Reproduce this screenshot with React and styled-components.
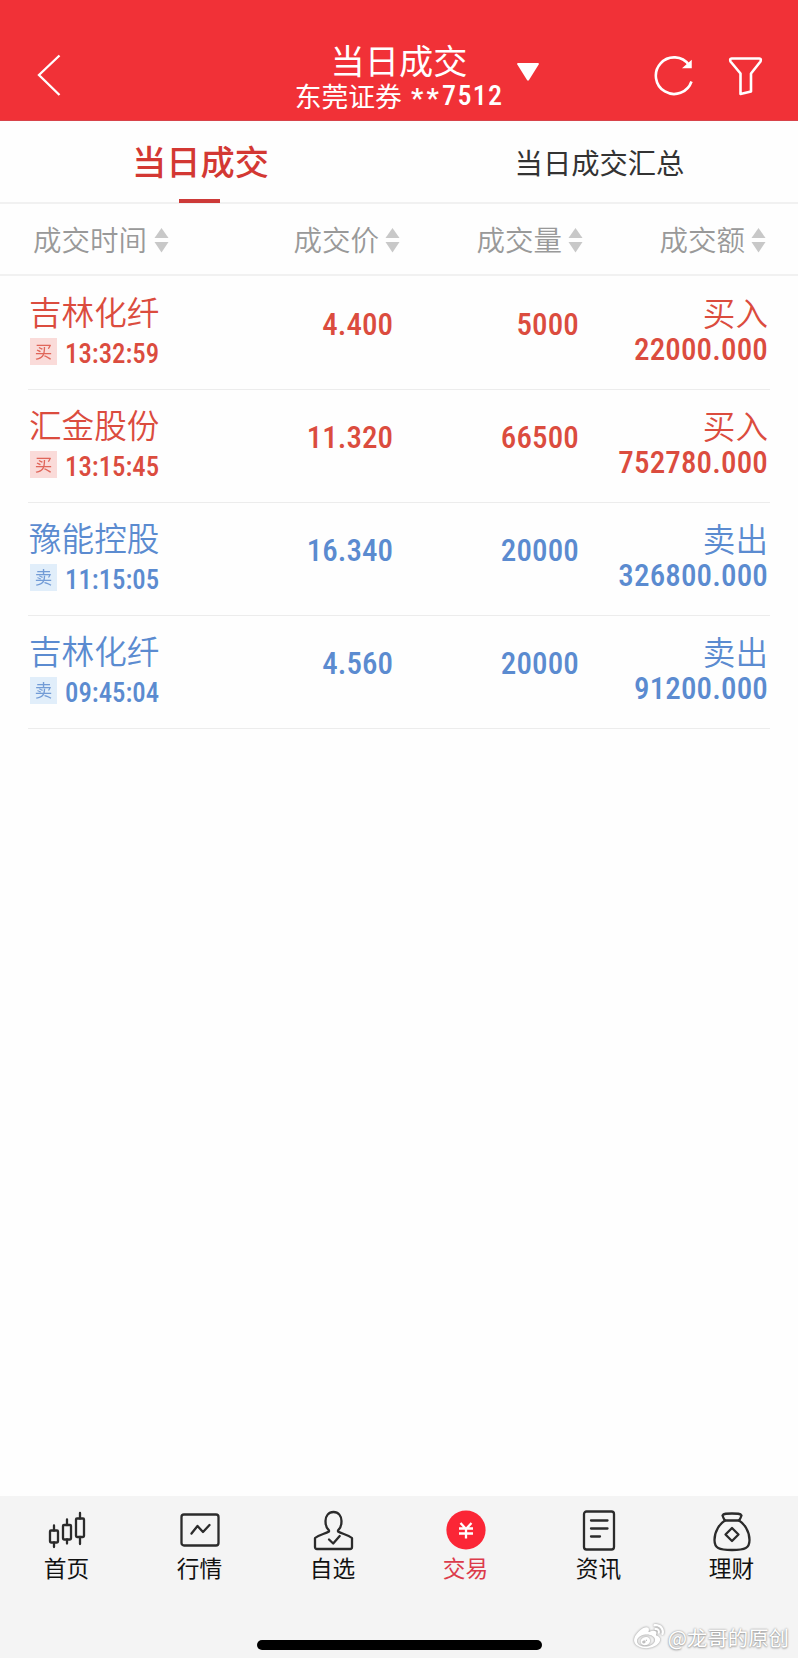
import React from "react";
import styled, { createGlobalStyle } from "styled-components";
import { FaWeibo } from "react-icons/fa";

const GlobalStyle = createGlobalStyle`
  * { box-sizing: border-box; }
  body { margin: 0; background: #fff; }
`;

const cjk = `"Noto Sans CJK SC", sans-serif`;
const digits = `Roboto, "Noto Sans CJK SC", sans-serif`;
const BUY = "#db4c3e";
const SELL = "#5b8bd0";

const Screen = styled.div`
  position: relative;
  display: flex;
  flex-direction: column;
  width: 798px;
  height: 1658px;
  overflow: hidden;
  background: #fefefe;
  font-family: ${cjk};
`;

const Header = styled.header`
  display: grid;
  grid-template-columns: 200px 1fr 200px;
  height: 121px;
  padding-top: 36px;
  color: #fff;
  background: #f13137;
  border-bottom: 1px solid #d8434a;
`;

const BackButton = styled.button`
  display: block;
  width: 60px;
  height: 66px;
  margin-left: 20px;
  padding: 0;
  border: 0;
  background: none;
  svg { display: block; margin: 12px 0 0 17px; }
`;

const TitleArea = styled.div`
  position: relative;
  text-align: center;
`;

const Title = styled.h1`
  margin: 0;
  font-size: 34.2px;
  font-weight: 400;
  line-height: 46px;
`;

const Account = styled.div`
  display: flex;
  justify-content: center;
  align-items: center;
  height: 26px;
  margin-top: 1px;
  font-size: 26.8px;
  line-height: 26px;
  font-weight: 400;
`;

const AccountNumber = styled.span`
  display: flex;
  align-items: center;
  margin-left: 9px;
  font-family: ${digits};
  font-size: 28px;
  font-stretch: 75%;
  font-weight: 500;
  letter-spacing: 1.3px;
  white-space: nowrap;
`;

const Mask = styled.span`
  padding-top: 6px;
  letter-spacing: 3.2px;
`;

const Caret = styled.svg`
  position: absolute;
  left: 316px;
  top: 26px;
`;

const Actions = styled.div`
  display: flex;
  gap: 33px;
  padding: 19px 0 0 55px;
  svg { display: block; flex: none; }
`;

const Tabs = styled.nav`
  display: grid;
  grid-template-columns: 1fr 1fr;
  height: 83px;
  border-bottom: 2px solid #f1f1f1;
`;

const Tab = styled.div`
  display: flex;
  flex-direction: column;
  align-items: center;
  justify-content: space-between;
  padding-top: ${(p) => (p.$active ? 17 : 19)}px;
  margin-bottom: -1px;
  color: ${(p) => (p.$active ? "#d33833" : "#333")};
  font-size: ${(p) => (p.$active ? 34.2 : 28.3)}px;
  font-weight: ${(p) => (p.$active ? 500 : 400)};
  line-height: 44px;
  padding-left: 2px;
  &::after {
    content: "";
    width: 41px;
    height: 4px;
    margin-right: 2px;
    background: ${(p) => (p.$active ? "#cd3a38" : "transparent")};
  }
`;

const ColumnHeads = styled.div`
  display: grid;
  grid-template-columns: 167px 200px 183px 183px;
  height: 72px;
  padding: 0 32px 0 33px;
  align-items: center;
  color: #999;
  border-bottom: 2px solid #f1f1f1;
`;

const ColumnHead = styled.div`
  display: flex;
  align-items: center;
  justify-content: flex-end;
  gap: 6px;
  height: 40px;
  font-size: 28.5px;
  font-weight: 350;
  line-height: 40px;
  white-space: nowrap;
  &:first-child { justify-content: flex-start; gap: 7px; }
  svg { display: block; flex: none; margin-top: 1px; }
`;

const Trades = styled.main`
  flex: 1;
  padding: 0 28px;
`;

const TradeRow = styled.article`
  display: grid;
  grid-template-columns: 165px 200px 186px 189px;
  height: 113px;
  color: ${(p) => (p.$buy ? BUY : SELL)};
  border-bottom: 1px solid #ececec;
  &:first-child { height: 114px; padding-top: 1px; }
`;

const Security = styled.div`
  display: flex;
  flex-direction: column;
  padding: 15px 0 0 1px;
`;

const Name = styled.div`
  font-size: 32.6px;
  font-weight: 350;
  line-height: 38px;
  white-space: nowrap;
`;

const TimeLine = styled.div`
  display: flex;
  align-items: flex-start;
  margin-top: 8px;
`;

const Badge = styled.span`
  width: 27px;
  height: 27px;
  margin: 0 8px 0 1px;
  text-align: center;
  font-size: 17.5px;
  line-height: 25px;
  opacity: 0.85;
  background: ${(p) => (p.$buy ? "#fad5d3" : "#dcecfa")};
`;

const Figure = styled.div`
  font-family: ${digits};
  font-size: ${(p) => p.$size || 31}px;
  font-weight: 500;
  font-stretch: 75%;
  line-height: 30px;
  letter-spacing: ${(p) => p.$spacing || 0}px;
  text-align: right;
  white-space: nowrap;
  margin-top: ${(p) => p.$top || 0}px;
`;

const Total = styled.div`
  padding-top: 16px;
  text-align: right;
`;

const Direction = styled.div`
  font-size: 32.6px;
  font-weight: 350;
  line-height: 38px;
`;

const BottomBar = styled.footer`
  display: flex;
  flex-direction: column;
  align-items: center;
  justify-content: space-between;
  height: 162px;
  padding-bottom: 8px;
  background: #f4f4f4;
`;

const NavItems = styled.nav`
  display: grid;
  grid-template-columns: repeat(6, 133px);
`;

const NavItem = styled.div`
  display: flex;
  flex-direction: column;
  align-items: center;
  padding-top: 14px;
  color: ${(p) => (p.$active ? "#dc3b4b" : "#111")};
  font-size: 22.7px;
  line-height: 30px;
  svg { display: block; margin-bottom: 1px; }
`;

const HomeIndicator = styled.div`
  width: 285px;
  height: 10px;
  border-radius: 5px;
  background: #000;
`;

const Watermark = styled.div`
  position: absolute;
  right: 9px;
  bottom: 6px;
  display: flex;
  align-items: center;
  gap: 4px;
  color: #fff;
  font-size: 20.4px;
  line-height: 30px;
  text-shadow: 0 0 2px #888, 0 1px 2px #aaa;
  svg { filter: drop-shadow(0 0 1px #888); }
`;

const SortIcon = () => (
  <svg width="15" height="26" viewBox="0 0 15 26" fill="#c8c8c8">
    <path d="M7.5 1 14.500 11H.5z" />
    <path d="M.5 15h14L7.5 25.500z" />
  </svg>
);

const NavIcon = ({ children }) => (
  <svg width="42" height="42" viewBox="0 0 42 42" fill="none" stroke="#2b2b2b" strokeWidth="2.3" strokeLinejoin="round" strokeLinecap="round">
    {children}
  </svg>
);

const navItems = [
  {
    label: "首页",
    icon: (
      <>
        <rect x="4" y="20.500" width="8" height="12" rx="1" />
        <rect x="17" y="15" width="8" height="14.500" rx="1" />
        <rect x="30" y="8.500" width="8" height="18.500" rx="1" />
        <path d="M8 15.500v5M8 32.500v4.500M21 9.500v5.500M21 29.500v4M34 3v5.500M34 27v7" />
      </>
    ),
  },
  {
    label: "行情",
    icon: (
      <>
        <rect x="2.5" y="4.500" width="37" height="31" rx="2.500" />
        <path d="M12.500 23.500l6-7.500 5.500 6 6.500-7" />
      </>
    ),
  },
  {
    label: "自选",
    icon: (
      <>
        <path d="M17 20.500c-2.500-2-3.500-5-3.500-9.500 0-5 3-9 8-9s8 4 8 9c0 4.500-1 7.500-3.500 9.500v1c4 2.500 10 3 14 6.500V37q0 2-2 2H5q-2 0-2-2v-9c4-3.500 10-4 14-6.500z" />
        <path d="M17 29.500l4.200 4 6.500-7.500" />
      </>
    ),
  },
  {
    label: "交易",
    active: true,
    icon: (
      <>
        <circle cx="21" cy="20" r="19.600" fill="#fb2636" stroke="none" />
        <path d="M15.500 13l5.500 6 5.500-6M14 18.500h14M14 23.500h14M21 19v9.500" stroke="#fff" strokeLinecap="butt" />
      </>
    ),
  },
  {
    label: "资讯",
    icon: (
      <>
        <rect x="6" y="1.500" width="30" height="38" rx="2.500" />
        <path d="M13 10.500h16.500M13 18.500h16.500M13 26.500h9" />
      </>
    ),
  },
  {
    label: "理财",
    icon: (
      <>
        <path d="M14 10.500c-1.500-2-2-3.500-2.500-5 1-2 4-2 9.500-2s8.500 0 9.500 2c-.5 1.500-1 3-2.500 5" />
        <path d="M14 10.500h14c5 3 10.500 10.500 10.500 19.500 0 8-4 10-17.500 10S3.500 38 3.500 30C3.500 21 9 13.500 14 10.500z" />
        <path d="M21 18l6.500 6.500-6.500 6.500-6.500-6.500z" />
      </>
    ),
  },
];

const trades = [
  { name: "吉林化纤", time: "13:32:59", price: "4.400", qty: "5000", total: "22000.000", buy: true },
  { name: "汇金股份", time: "13:15:45", price: "11.320", qty: "66500", total: "752780.000", buy: true },
  { name: "豫能控股", time: "11:15:05", price: "16.340", qty: "20000", total: "326800.000", buy: false },
  { name: "吉林化纤", time: "09:45:04", price: "4.560", qty: "20000", total: "91200.000", buy: false },
];

export default function App() {
  return (
    <Screen>
      <GlobalStyle />
      <Header>
        <BackButton aria-label="返回">
          <svg width="24" height="42" viewBox="0 0 24 42" fill="none" stroke="#fff" strokeWidth="2.3">
            <path d="M22.500 1.500 2 21l20.500 20" />
          </svg>
        </BackButton>
        <TitleArea>
          <Title>当日成交</Title>
          <Account>
            东莞证券
            <AccountNumber>
              <Mask>**</Mask>7512
            </AccountNumber>
          </Account>
          <Caret width="24" height="20" viewBox="0 0 24 20" fill="#fff">
            <path d="M2 1h20q1.500 0 .7 1.500L13 18q-1 1.500-2 0L1.300 2.500Q.5 1 2 1z" />
          </Caret>
        </TitleArea>
        <Actions>
          <svg width="42" height="42" viewBox="0 0 42 42" fill="none" stroke="#fff" strokeWidth="2.600">
            <path d="M38.500 26.500A18.300 18.300 0 1 1 36 10" />
            <path d="M31 12.500h7V6.500z" fill="#fff" stroke="#fff" strokeWidth="1.500" />
          </svg>
          <svg width="36" height="42" viewBox="0 0 36 42" fill="none" stroke="#fff" strokeWidth="2.600" strokeLinejoin="round">
            <path d="M3.500 3.500h28q2 0 1 3L23 18.500v18L12.500 39V18.500L2.500 6.500q-1-3 1-3z" />
          </svg>
        </Actions>
      </Header>
      <Tabs>
        <Tab $active>当日成交</Tab>
        <Tab>当日成交汇总</Tab>
      </Tabs>
      <ColumnHeads>
        {["成交时间", "成交价", "成交量", "成交额"].map((label) => (
          <ColumnHead key={label}>
            {label}
            <SortIcon />
          </ColumnHead>
        ))}
      </ColumnHeads>
      <Trades>
        {trades.map((t) => (
          <TradeRow key={t.time} $buy={t.buy}>
            <Security>
              <Name>{t.name}</Name>
              <TimeLine>
                <Badge $buy={t.buy}>{t.buy ? "买" : "卖"}</Badge>
                <Figure $size={26.8} $top={1}>{t.time}</Figure>
              </TimeLine>
            </Security>
            <Figure $top={33}>{t.price}</Figure>
            <Figure $top={33} $spacing={0.15}>{t.qty}</Figure>
            <Total>
              <Direction>{t.buy ? "买入" : "卖出"}</Direction>
              <Figure $top={4} $spacing={0.15}>{t.total}</Figure>
            </Total>
          </TradeRow>
        ))}
      </Trades>
      <BottomBar>
        <NavItems>
          {navItems.map((item) => (
            <NavItem key={item.label} $active={item.active}>
              <NavIcon>{item.icon}</NavIcon>
              {item.label}
            </NavItem>
          ))}
        </NavItems>
        <HomeIndicator />
      </BottomBar>
      <Watermark>
        <FaWeibo size={30} />
        @龙哥的原创
      </Watermark>
    </Screen>
  );
}
